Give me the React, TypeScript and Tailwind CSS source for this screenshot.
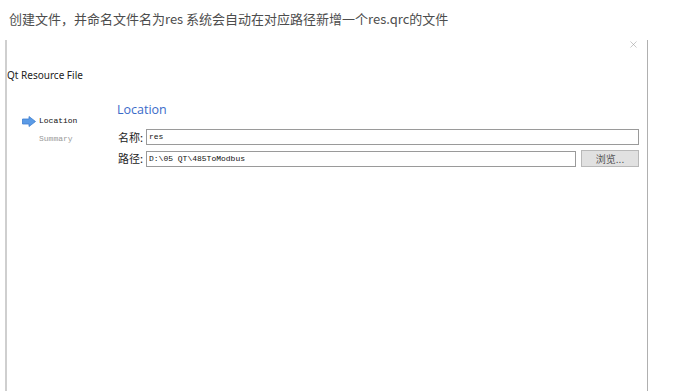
import { X } from 'lucide-react'

const cjk = '"Noto Sans CJK SC", "Noto Sans", sans-serif'
const mono = '"Liberation Mono", "Noto Sans CJK SC", monospace'

function NavArrow() {
  return (
    <svg width="14" height="11" viewBox="0 0 14 11">
      <path d="M0.5 3 H7 V0.5 L13.5 5.5 L7 10.5 V8 H0.5 Z" fill="#5b9be6" stroke="#3f7fd0" strokeWidth="0.8" />
    </svg>
  )
}

export default function App() {
  return (
    <div className="w-[690px] h-[391px] bg-white overflow-hidden flex flex-col" style={{ fontFamily: cjk }}>
      <p className="pl-[9px] pt-[10px] h-[40px] text-[13px] leading-[18px] text-[#4d4d4d]">
        创建文件，并命名文件名为res 系统会自动在对应路径新增一个res.qrc的文件
      </p>

      <div className="relative ml-[5px] w-[643px] flex-1 border-l-2 border-r border-l-[#cfcfcf] border-r-[#b0b0b0]">
        <X className="absolute right-[8px] top-[-1px] w-[11px] h-[11px] text-[#9a9a9a]" strokeWidth={1.2} />

        <div className="pt-[29px] pl-[0px] text-[10px] leading-[12px] text-[#222]" style={{ fontFamily: '"Noto Sans", sans-serif' }}>
          Qt Resource File
        </div>

        <div className="flex mt-[21px]">
          <div className="w-[110px] pl-[15px] pt-[13px] flex flex-col gap-[6px]" style={{ fontFamily: mono }}>
            <div className="flex items-center gap-[3px] text-[8px] leading-[12px] text-[#111]">
              <NavArrow />
              <span>Location</span>
            </div>
            <div className="pl-[17px] text-[8px] leading-[12px] text-[#9a9a9a]">Summary</div>
          </div>

          <div className="flex-1 pr-[8px]">
            <div className="text-[12.5px] leading-[16px] text-[#3a6bc9] pl-[0px]" style={{ fontFamily: '"Open Sans", sans-serif' }}>
              Location
            </div>
            <div className="mt-[11px] flex items-center h-[16px]">
              <span className="w-[29px] pl-[1px] text-[11px] text-[#222]">名称:</span>
              <div className="flex-1 h-[16px] border border-[#9a9a9a] pl-[2px] text-[8px] leading-[14px] text-[#111]" style={{ fontFamily: mono }}>
                res
              </div>
            </div>
            <div className="mt-[5px] flex items-center h-[17px]">
              <span className="w-[29px] pl-[1px] text-[11px] text-[#222]">路径:</span>
              <div className="w-[430px] h-[16px] border border-[#9a9a9a] pl-[2px] text-[8px] leading-[14px] text-[#111]" style={{ fontFamily: mono }}>
                D:\05 QT\485ToModbus
              </div>
              <div className="ml-[5px] w-[58px] h-[17px] bg-[#e1e1e1] border border-[#b8b8b8] text-[10px] leading-[15px] text-[#555] text-center">
                浏览...
              </div>
            </div>
          </div>
        </div>
      </div>
    </div>
  )
}
